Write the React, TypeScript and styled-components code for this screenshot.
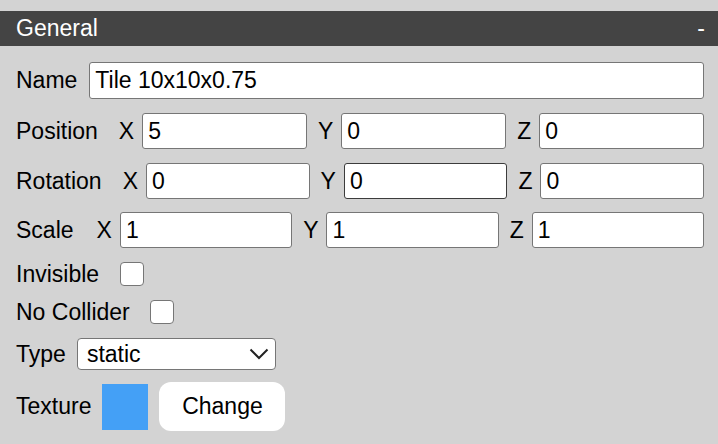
import React from "react";
import styled, { createGlobalStyle } from "styled-components";

const Global = createGlobalStyle`
  html, body { margin: 0; padding: 0; background: #d3d3d3; }
  body { font-family: "Liberation Sans", Arial, Helvetica, sans-serif; font-size: 23px; color: #000; }
  * { box-sizing: border-box; }
`;

const Panel = styled.div`
  width: 718px;
  height: 444px;
  padding-top: 11px;
  background: #d3d3d3;
`;

const Header = styled.div`
  height: 35px;
  background: #444444;
  color: #fff;
  display: flex;
  align-items: center;
  justify-content: space-between;
  padding: 0 13px 0 16px;
  font-size: 23px;
`;

const Body = styled.div`
  display: flex;
  flex-direction: column;
  padding: 0 14px 0 16px;
`;

const Row = styled.div<{ $top: number; $h: number }>`
  display: flex;
  align-items: center;
  margin-top: ${(p) => p.$top}px;
  height: ${(p) => p.$h}px;
`;

const Label = styled.span<{ $gap: number }>`
  margin-right: ${(p) => p.$gap}px;
  white-space: nowrap;
`;

const Axis = styled.span`
  margin-right: 8px;
`;

const TextInput = styled.input<{ $dark?: boolean; $last?: boolean }>`
  flex: 1 1 0;
  min-width: 0;
  height: 100%;
  margin: 0 ${(p) => (p.$last ? 0 : 11)}px 0 0;
  padding: 0 5px;
  border: 1px solid ${(p) => (p.$dark ? "#3c3c3c" : "#767676")};
  border-radius: 3px;
  background: #fff;
  font-family: "Liberation Sans", Arial, sans-serif;
  font-size: 23px;
  color: #000;
  outline: none;
`;

const Check = styled.span`
  width: 24px;
  height: 24px;
  border: 1.5px solid #767676;
  border-radius: 4px;
  background: #fff;
`;

const Select = styled.div`
  width: 199px;
  height: 32px;
  border: 1.5px solid #767676;
  border-radius: 4px;
  background: #fff;
  display: flex;
  align-items: center;
  justify-content: space-between;
  padding: 0 6px 0 9px;
`;

const Swatch = styled.div`
  width: 46px;
  height: 46px;
  background: #44a0f6;
  margin-right: 11px;
`;

const Button = styled.button`
  width: 126px;
  height: 49px;
  border: none;
  border-radius: 12px;
  background: #fff;
  font-family: "Liberation Sans", Arial, sans-serif;
  font-size: 23px;
  color: #000;
  padding: 0;
`;

const Chevron = () => (
  <svg width="20" height="12" viewBox="0 0 20 12" fill="none">
    <path d="M1.5 1.5 L10 10 L18.5 1.5" stroke="#222" strokeWidth="2" />
  </svg>
);

type Vec = { label: string; gap: number; vals: string[]; dark?: number };

const vecs: Vec[] = [
  { label: "Position", gap: 21, vals: ["5", "0", "0"] },
  { label: "Rotation", gap: 21, vals: ["0", "0", "0"], dark: 1 },
  { label: "Scale", gap: 23, vals: ["1", "1", "1"] },
];

const tops = [14, 14, 13];
const axes = ["X", "Y", "Z"];

export default function App() {
  return (
    <Panel>
      <Global />
      <Header>
        <span>General</span>
        <span>-</span>
      </Header>
      <Body>
        <Row $top={16} $h={37}>
          <Label $gap={12}>Name</Label>
          <TextInput $last defaultValue="Tile 10x10x0.75" />
        </Row>
        {vecs.map((v, i) => (
          <Row key={v.label} $top={tops[i]} $h={36}>
            <Label $gap={v.gap}>{v.label}</Label>
            {axes.map((a, j) => (
              <React.Fragment key={a}>
                <Axis>{a}</Axis>
                <TextInput $last={j === 2} $dark={v.dark === j} defaultValue={v.vals[j]} />
              </React.Fragment>
            ))}
          </Row>
        ))}
        <Row $top={14} $h={24}>
          <Label $gap={21}>Invisible</Label>
          <Check />
        </Row>
        <Row $top={14} $h={24}>
          <Label $gap={20}>No Collider</Label>
          <Check />
        </Row>
        <Row $top={14} $h={32}>
          <Label $gap={11}>Type</Label>
          <Select>
            <span>static</span>
            <Chevron />
          </Select>
        </Row>
        <Row $top={12} $h={49}>
          <Label $gap={11}>Texture</Label>
          <Swatch />
          <Button>Change</Button>
        </Row>
      </Body>
    </Panel>
  );
}
